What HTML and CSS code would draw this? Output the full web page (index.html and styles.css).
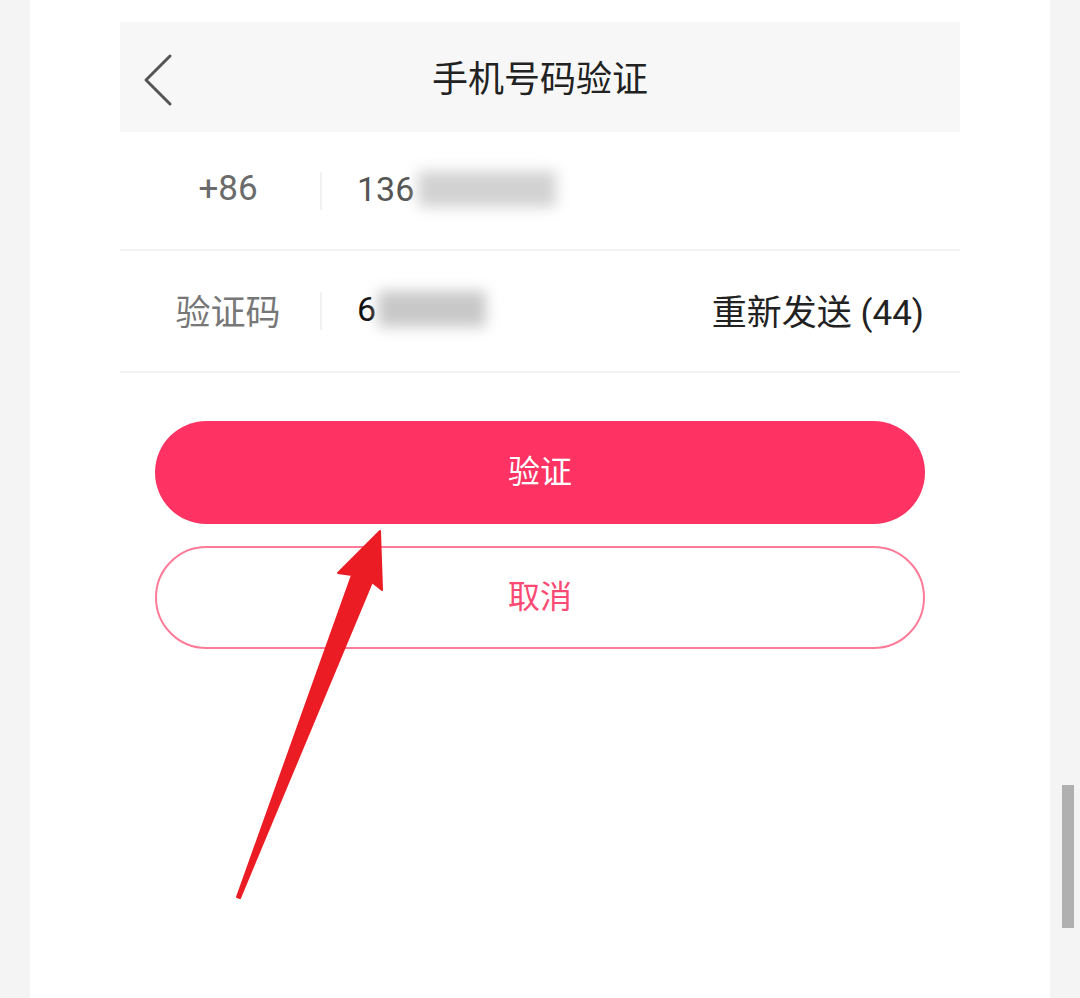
FILE: index.html
```html
<!DOCTYPE html>
<html lang="zh-CN">
<head>
    <meta charset="UTF-8">
    <meta name="viewport" content="width=device-width, initial-scale=1.0">
    <title>手机号码验证</title>
    <link rel="stylesheet" href="styles.css">
</head>
<body>
    <div class="page">
        <div class="sheet">
            <div class="top-bar">
                <span class="back-btn">
                    <svg width="32" height="54" viewBox="0 0 32 54">
                        <polyline points="28,3 4,27 28,51" fill="none" stroke="#555" stroke-width="3" stroke-linecap="round" stroke-linejoin="round"/>
                    </svg>
                </span>
                <h1>手机号码验证</h1>
            </div>

            <div class="form-row">
                <div class="row-label">+86</div>
                <div class="row-divider"></div>
                <div class="row-value phone">136<span class="masked masked-phone"></span></div>
            </div>
            <div class="form-row code-row">
                <div class="row-label">验证码</div>
                <div class="row-divider"></div>
                <div class="row-value code">6<span class="masked masked-code"></span></div>
                <div class="resend">重新发送 (44)</div>
            </div>

            <div class="actions">
                <button class="btn btn-primary">验证</button>
                <button class="btn btn-outline">取消</button>
            </div>
        </div>

        <svg class="annotation" width="1080" height="998" viewBox="0 0 1080 998">
            <polygon points="237,897 352,575 338,573 380,531 382,590 372,582 240,898" fill="#ec1c24" stroke="#ec1c24" stroke-width="2" stroke-linejoin="round"/>
        </svg>

        <div class="scrollbar"></div>
    </div>
</body>
</html>
```

FILE: styles.css
```css
body {
    margin: 0;
    background-color: #f4f4f4;
    font-family: Roboto, "Noto Sans CJK SC", sans-serif;
}
.page {
    position: relative;
    width: 1080px;
    height: 998px;
    overflow: hidden;
}
.sheet {
    width: 1020px;
    height: 998px;
    margin: 0 auto;
    background-color: #fff;
    padding-top: 22px;
    box-sizing: border-box;
}
.top-bar {
    position: relative;
    width: 840px;
    height: 110px;
    margin: 0 auto;
    background-color: #f7f7f7;
    display: flex;
    align-items: center;
    justify-content: center;
}
.top-bar h1 {
    margin: 0 0 2px;
    font-size: 36px;
    font-weight: 400;
    color: #222;
    font-family: "Noto Sans CJK SC", sans-serif;
}
.back-btn {
    position: absolute;
    left: 22px;
    top: 31px;
    line-height: 0;
}
.form-row {
    width: 840px;
    height: 117px;
    margin: 0 auto;
    display: flex;
    align-items: center;
    border-bottom: 2px solid #f3f3f3;
}
.code-row {
    height: 120px;
}
.row-label {
    width: 184px;
    padding-left: 16px;
    padding-bottom: 4px;
    text-align: center;
    font-size: 35px;
    color: #6b6b6b;
}
.code-row .row-label {
    color: #777;
}
.row-divider {
    width: 2px;
    height: 38px;
    background-color: #f2f2f2;
}
.row-value {
    margin-left: 35px;
    padding-bottom: 4px;
    font-size: 34px;
    display: flex;
    align-items: center;
}
.phone {
    color: #555;
}
.code {
    color: #111;
}
.masked {
    display: inline-block;
    height: 36px;
    background-color: #c8c8c8;
    filter: blur(7px);
}
.masked-phone {
    width: 138px;
    margin-left: 4px;
    background-color: #d2d2d2;
}
.masked-code {
    width: 108px;
    margin-left: 2px;
}
.resend {
    margin-left: auto;
    margin-right: 36px;
    padding-bottom: 4px;
    font-size: 35px;
    color: #222;
}
.actions {
    width: 770px;
    margin: 48px auto 0;
    display: flex;
    flex-direction: column;
    gap: 22px;
}
.btn {
    height: 103px;
    border-radius: 52px;
    padding-bottom: 8px;
    font-size: 32px;
    font-family: "Noto Sans CJK SC", sans-serif;
    cursor: pointer;
}
.btn-primary {
    background-color: #fe3263;
    border: none;
    color: #fff;
}
.btn-outline {
    background-color: #fff;
    border: 2px solid #fe7b98;
    color: #fb4a73;
}
.annotation {
    position: absolute;
    left: 0;
    top: 0;
    pointer-events: none;
}
.scrollbar {
    position: absolute;
    left: 1062px;
    top: 785px;
    width: 12px;
    height: 143px;
    background-color: #b0b0b0;
}
```
